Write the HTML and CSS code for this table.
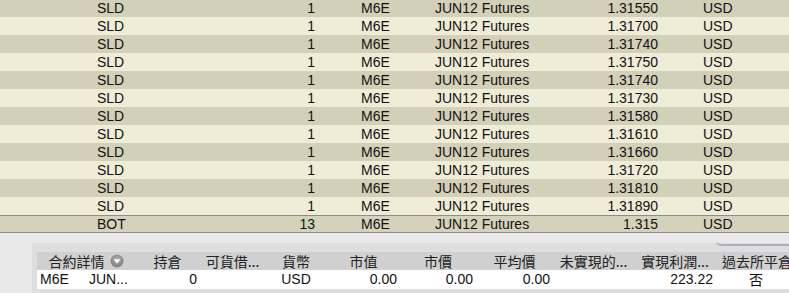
FILE: index.html
```html
<!DOCTYPE html>
<html>
<head>
<meta charset="utf-8">
<link rel="stylesheet" href="styles.css">
</head>
<body>
<div class="screen">
  <div class="trades">
    <div class="row dark"><span class="c1">SLD</span><span class="c2">1</span><span class="c3">M6E</span><span class="c4">JUN12 Futures</span><span class="c5">1.31550</span><span class="c6">USD</span></div>
    <div class="row light"><span class="c1">SLD</span><span class="c2">1</span><span class="c3">M6E</span><span class="c4">JUN12 Futures</span><span class="c5">1.31700</span><span class="c6">USD</span></div>
    <div class="row dark"><span class="c1">SLD</span><span class="c2">1</span><span class="c3">M6E</span><span class="c4">JUN12 Futures</span><span class="c5">1.31740</span><span class="c6">USD</span></div>
    <div class="row light"><span class="c1">SLD</span><span class="c2">1</span><span class="c3">M6E</span><span class="c4">JUN12 Futures</span><span class="c5">1.31750</span><span class="c6">USD</span></div>
    <div class="row dark"><span class="c1">SLD</span><span class="c2">1</span><span class="c3">M6E</span><span class="c4">JUN12 Futures</span><span class="c5">1.31740</span><span class="c6">USD</span></div>
    <div class="row light"><span class="c1">SLD</span><span class="c2">1</span><span class="c3">M6E</span><span class="c4">JUN12 Futures</span><span class="c5">1.31730</span><span class="c6">USD</span></div>
    <div class="row dark"><span class="c1">SLD</span><span class="c2">1</span><span class="c3">M6E</span><span class="c4">JUN12 Futures</span><span class="c5">1.31580</span><span class="c6">USD</span></div>
    <div class="row light"><span class="c1">SLD</span><span class="c2">1</span><span class="c3">M6E</span><span class="c4">JUN12 Futures</span><span class="c5">1.31610</span><span class="c6">USD</span></div>
    <div class="row dark"><span class="c1">SLD</span><span class="c2">1</span><span class="c3">M6E</span><span class="c4">JUN12 Futures</span><span class="c5">1.31660</span><span class="c6">USD</span></div>
    <div class="row light"><span class="c1">SLD</span><span class="c2">1</span><span class="c3">M6E</span><span class="c4">JUN12 Futures</span><span class="c5">1.31720</span><span class="c6">USD</span></div>
    <div class="row dark"><span class="c1">SLD</span><span class="c2">1</span><span class="c3">M6E</span><span class="c4">JUN12 Futures</span><span class="c5">1.31810</span><span class="c6">USD</span></div>
    <div class="row light"><span class="c1">SLD</span><span class="c2">1</span><span class="c3">M6E</span><span class="c4">JUN12 Futures</span><span class="c5">1.31890</span><span class="c6">USD</span></div>
    <div class="row total"><span class="c1">BOT</span><span class="c2">13</span><span class="c3">M6E</span><span class="c4">JUN12 Futures</span><span class="c5">1.315</span><span class="c6">USD</span></div>
  </div>
  <div class="gap"></div>
  <div class="panel">
    <div class="phead">
      <span class="h colA">合約詳情<span class="dd"><svg width="14" height="14" viewBox="0 0 14 14"><defs><radialGradient id="g" cx="50%" cy="40%" r="60%"><stop offset="0" stop-color="#b4b4b4"/><stop offset="1" stop-color="#7d7d7d"/></radialGradient></defs><circle cx="7" cy="7" r="6.5" fill="url(#g)"/><path d="M3.6 5.2 L10.4 5.2 L7 9.4 Z" fill="#ffffff"/></svg></span></span>
      <span class="h colB">持倉</span>
      <span class="h colC">可貨借...</span>
      <span class="h colD">貨幣</span>
      <span class="h colE">市值</span>
      <span class="h colF">市價</span>
      <span class="h colG">平均價</span>
      <span class="h colH">未實現的...</span>
      <span class="h colI">實現利潤...</span>
      <span class="h colJ">過去所平倉</span>
    </div>
    <div class="pdata">
      <span class="d colA1">M6E</span>
      <span class="d colA2">JUN...</span>
      <span class="d colB num">0</span>
      <span class="d colC"></span>
      <span class="d colD ctr">USD</span>
      <span class="d colE num">0.00</span>
      <span class="d colF num">0.00</span>
      <span class="d colG num">0.00</span>
      <span class="d colH"></span>
      <span class="d colI num">223.22</span>
      <span class="d colJ ctr cjk">否</span>
    </div>
  </div>
  <div class="tabcurve"></div>
</div>
</body>
</html>
```
FILE: styles.css
```css
html, body {
  margin: 0;
  padding: 0;
  background: #e9e9e9;
}
.screen {
  width: 789px;
  height: 293px;
  overflow: hidden;
  position: relative;
  font-family: "Liberation Sans", Arial, sans-serif;
  font-size: 14px;
  color: #121212;
}
.trades {
  margin-top: -1px;
}
.row {
  display: flex;
  height: 18px;
  line-height: 18px;
  white-space: nowrap;
}
.row.dark { background: #d3d0b9; }
.row.light { background: #efecd7; }
.row.total {
  background: #d4d2bb;
  border-top: 1px solid #8c8c8c;
  border-bottom: 1px solid #8c8c8c;
  height: 16px;
  line-height: 16px;
}
.row span { display: block; flex: none; }
.c1 { width: 63px; padding-left: 97px; }
.c2 { width: 155px; text-align: right; }
.c3 { width: 74px; padding-left: 46px; }
.c4 { width: 165px; }
.c5 { width: 58px; text-align: right; }
.c6 { width: 86px; padding-left: 45px; }

.gap {
  height: 10px;
}
.tabcurve {
  position: absolute;
  left: 716px;
  top: 241px;
  width: 80px;
  height: 3px;
  border-bottom: 2px solid #a8b2bf;
  border-bottom-left-radius: 6px;
}
.panel {
  margin-left: 32px;
  background: #dedede;
  padding: 9px 0 10px 5px;
}
.phead, .pdata {
  display: flex;
  white-space: nowrap;
}
.phead {
  height: 18px;
  line-height: 18px;
  background: #d0d0d0;
  font-family: "Noto Sans CJK TC", "Noto Sans CJK SC", sans-serif;
  font-size: 14px;
  color: #222;
}
.pdata {
  height: 19px;
  line-height: 19px;
  background: #ffffff;
}
.h, .d { display: block; flex: none; overflow: hidden; }
.h { text-align: center; }
.colA { width: 98px; display: flex; justify-content: center; align-items: center; gap: 5px; }
.dd { display: flex; width: 14px; height: 14px; }
.colA1 { width: 49px; padding-left: 3px; }
.colA2 { width: 46px; }
.colB { width: 65px; }
.colC { width: 65px; }
.colD { width: 62px; }
.colE { width: 73px; }
.colF { width: 76px; }
.colG { width: 77px; }
.colH { width: 81px; }
.colI { width: 82px; }
.colJ { width: 80px; }
.num { text-align: right; padding-right: 3px; box-sizing: border-box; }
.ctr { text-align: center; }
.cjk { font-family: "Noto Sans CJK TC", sans-serif; line-height: 19px; }
.phead .colJ { text-align: left; padding-left: 6px; }
```
